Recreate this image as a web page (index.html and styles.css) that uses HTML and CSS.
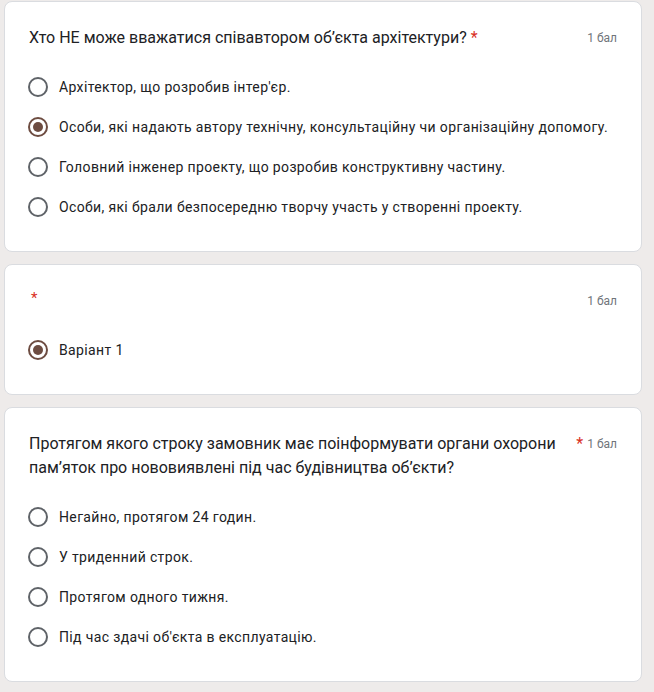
FILE: index.html
```html
<!DOCTYPE html>
<html lang="uk">
<head>
<meta charset="utf-8">
<title>Форма</title>
<link rel="stylesheet" href="styles.css">
</head>
<body>
<div class="page">
  <div class="card">
    <div class="header">
      <div class="title"><span class="title-text">Хто НЕ може вважатися співавтором об’єкта архітектури?</span><span class="req">*</span></div>
      <div class="points">1 бал</div>
    </div>
    <div class="options">
      <div class="option"><span class="radio"></span><span class="label">Архітектор, що розробив інтер'єр.</span></div>
      <div class="option"><span class="radio checked"></span><span class="label">Особи, які надають автору технічну, консультаційну чи організаційну допомогу.</span></div>
      <div class="option"><span class="radio"></span><span class="label">Головний інженер проекту, що розробив конструктивну частину.</span></div>
      <div class="option"><span class="radio"></span><span class="label">Особи, які брали безпосередню творчу участь у створенні проекту.</span></div>
    </div>
  </div>

  <div class="card">
    <div class="header">
      <div class="title"><span class="title-text"></span><span class="req req-only">*</span></div>
      <div class="points">1 бал</div>
    </div>
    <div class="options">
      <div class="option"><span class="radio checked"></span><span class="label">Варіант 1</span></div>
    </div>
  </div>

  <div class="card">
    <div class="header">
      <div class="title"><span class="title-text">Протягом якого строку замовник має поінформувати органи охорони пам’яток про нововиявлені під час будівництва об’єкти?</span><span class="req">*</span></div>
      <div class="points">1 бал</div>
    </div>
    <div class="options">
      <div class="option"><span class="radio"></span><span class="label">Негайно, протягом 24 годин.</span></div>
      <div class="option"><span class="radio"></span><span class="label">У триденний строк.</span></div>
      <div class="option"><span class="radio"></span><span class="label">Протягом одного тижня.</span></div>
      <div class="option"><span class="radio"></span><span class="label">Під час здачі об'єкта в експлуатацію.</span></div>
    </div>
  </div>
</div>
</body>
</html>
```

FILE: styles.css
```css
* { box-sizing: border-box; }

html, body {
  margin: 0;
  padding: 0;
  background: #eeebea;
}

body {
  font-family: Roboto, "Noto Sans", Arial, sans-serif;
  color: #202124;
}

.page {
  padding: 1px 12px 0 4px;
}

.card {
  background: #fff;
  border: 1px solid #dadce0;
  border-radius: 8px;
  padding: 24px;
  margin-bottom: 12px;
}

.header {
  display: flex;
  align-items: flex-start;
}

.title {
  flex: 1 1 auto;
  display: flex;
  align-items: flex-start;
  min-width: 0;
}

.title-text {
  flex: 0 1 auto;
  font-size: 16px;
  line-height: 24px;
  letter-spacing: 0;
  color: #202124;
}

.req {
  flex: 0 0 auto;
  color: #d93025;
  font-size: 16px;
  line-height: 24px;
  padding-left: 4px;
}

.req-only {
  padding-left: 2px;
  font-size: 15px;
  line-height: 19px;
}

.points {
  flex: 0 0 auto;
  margin-left: 4px;
  font-size: 12px;
  line-height: 24px;
  color: #70757a;
}

.options {
  margin-top: 17px;
}

.option {
  display: flex;
  align-items: center;
  height: 40px;
}

.radio {
  flex: 0 0 auto;
  width: 20px;
  height: 20px;
  border: 2px solid #5f6368;
  border-radius: 50%;
  margin-right: 11px;
  margin-left: -1px;
  display: flex;
  align-items: center;
  justify-content: center;
}

.radio.checked {
  border-color: #6d4c41;
}

.radio.checked::after {
  content: "";
  width: 10px;
  height: 10px;
  border-radius: 50%;
  background: #6d4c41;
}

.label {
  font-size: 14px;
  line-height: 20px;
  letter-spacing: 0.36px;
  color: #202124;
}
```
